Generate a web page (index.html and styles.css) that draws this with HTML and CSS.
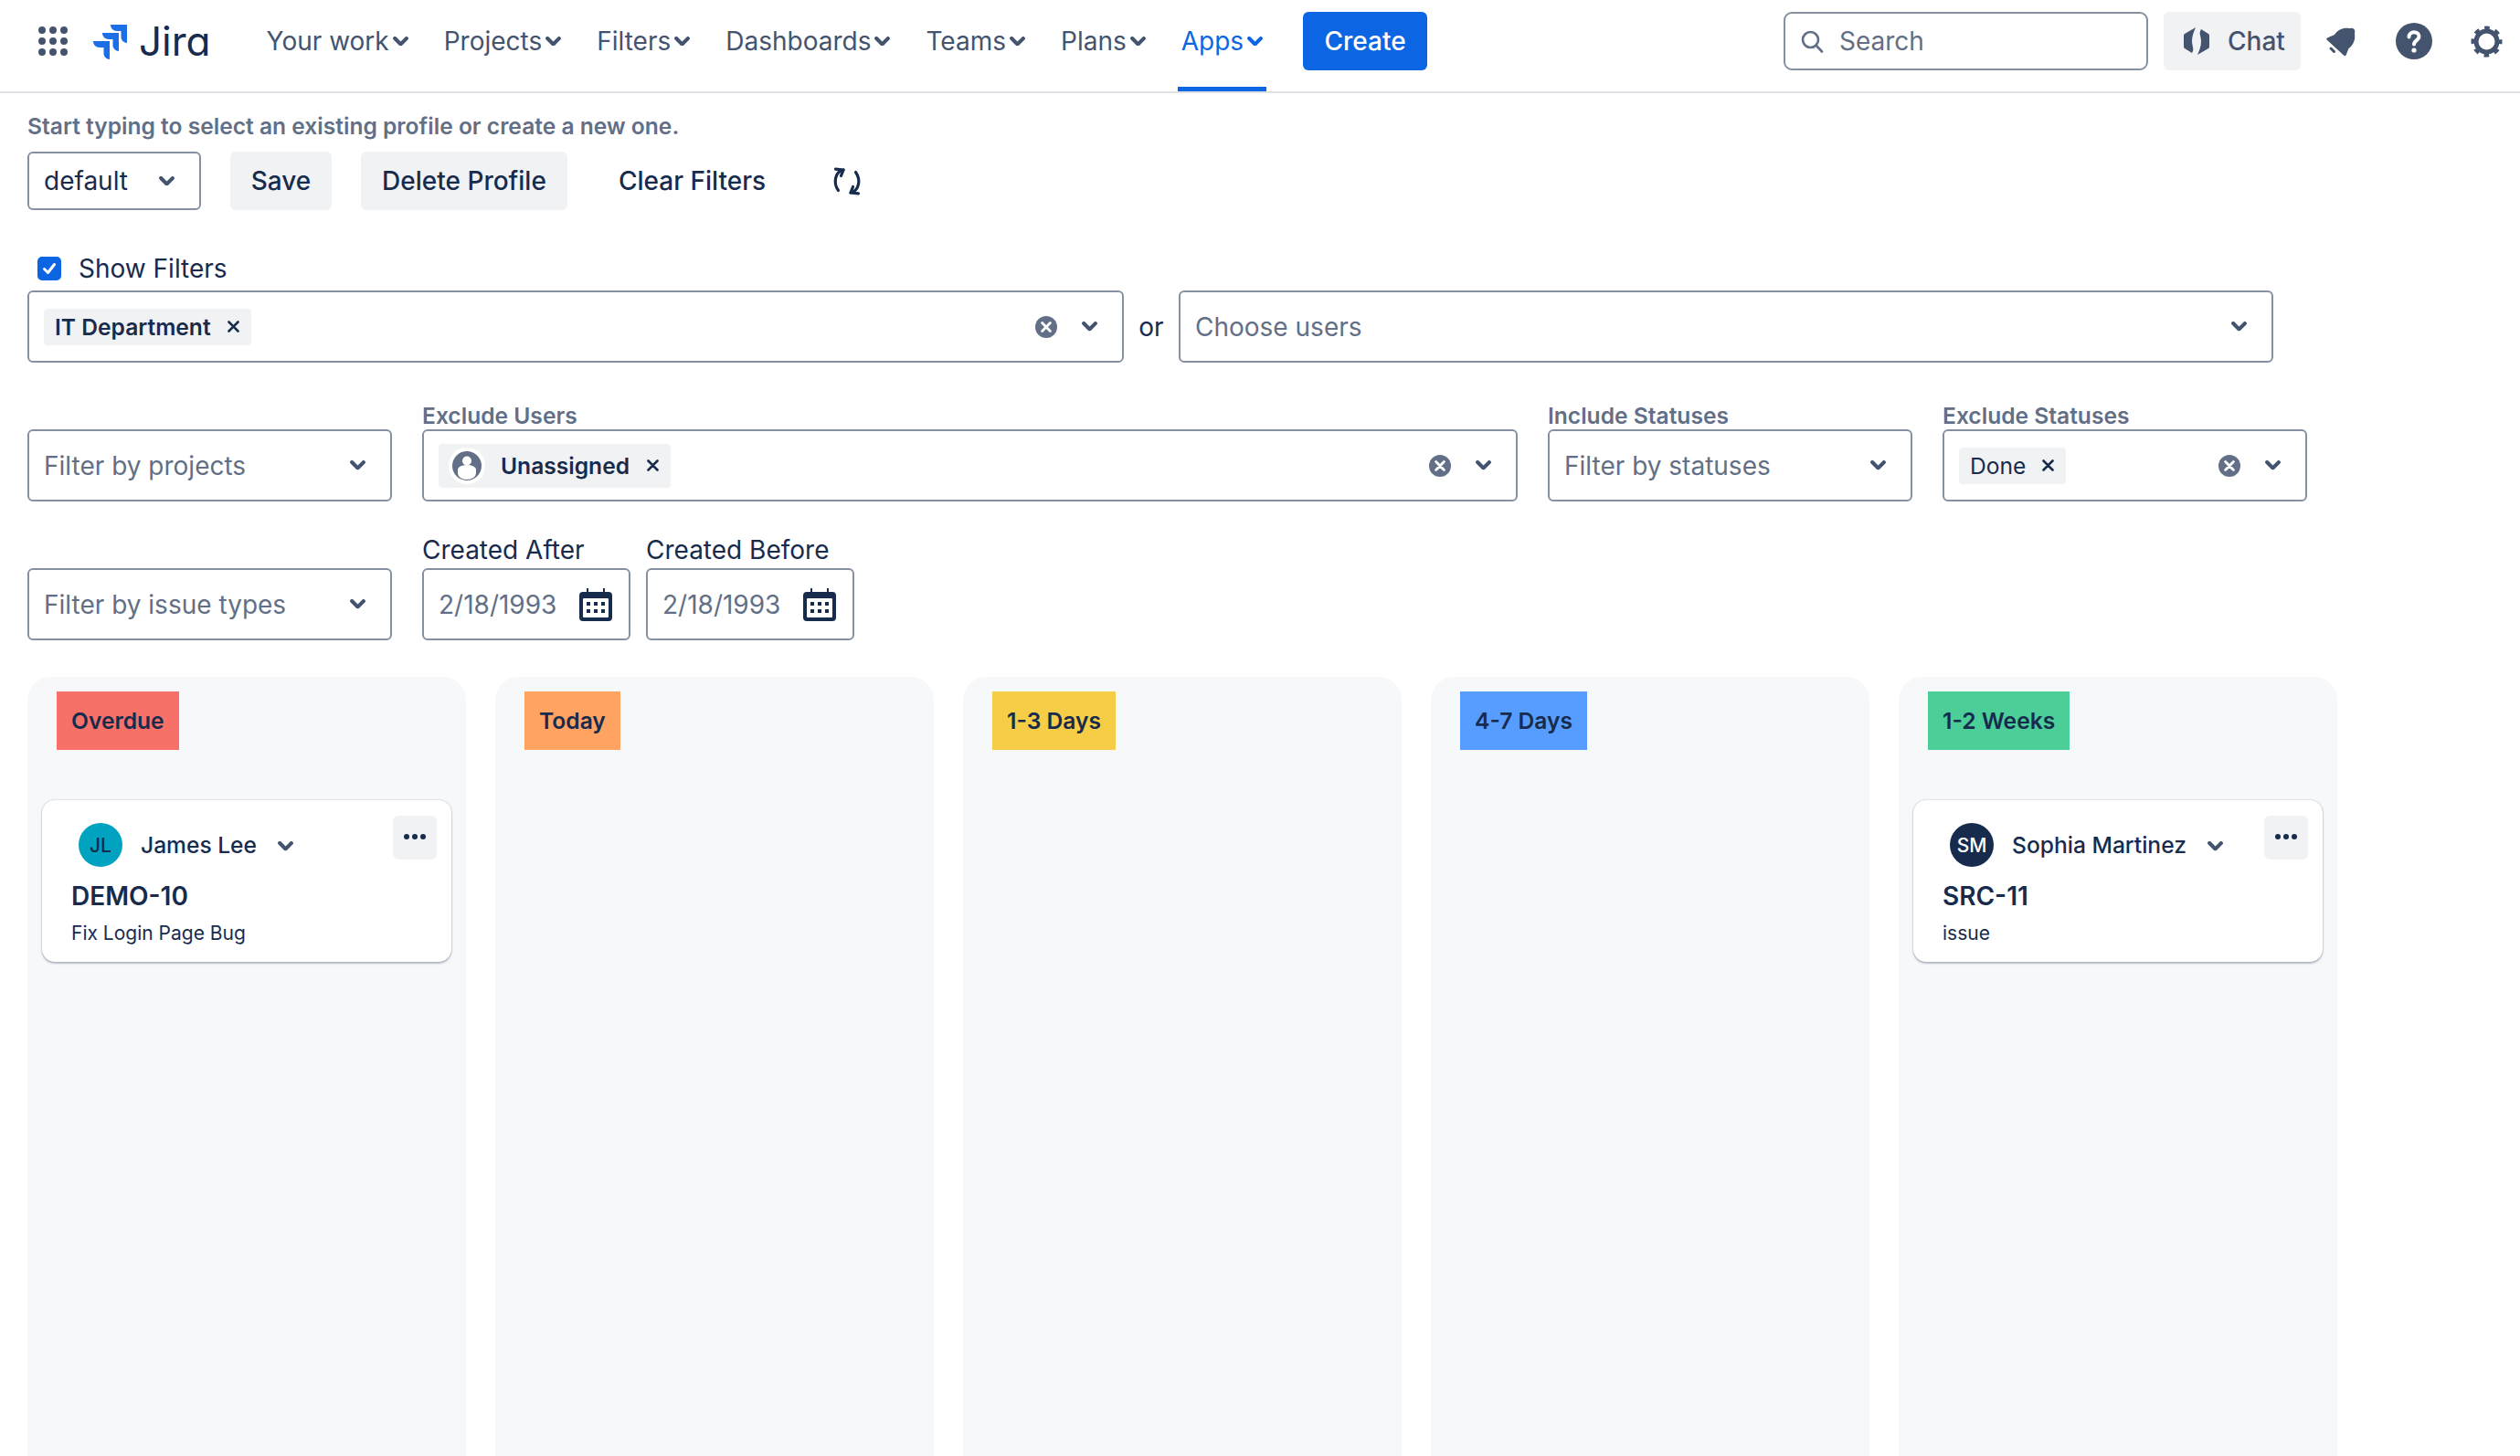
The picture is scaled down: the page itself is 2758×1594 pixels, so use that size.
FILE: index.html
```html
<!DOCTYPE html>
<html lang="en">
<head>
<meta charset="utf-8">
<title>Jira</title>
<link rel="stylesheet" href="styles.css">
</head>
<body>
<svg class="defs" aria-hidden="true">
  <symbol id="chev" viewBox="8 10 8 5"><path d="M8.292 10.293a1.009 1.009 0 000 1.419l2.939 2.965c.218.215.5.322.779.322s.556-.107.769-.322l2.93-2.955a1.01 1.01 0 000-1.419.987.987 0 00-1.406 0l-2.298 2.317-2.307-2.327a.99.99 0 00-1.406 0z" fill="currentColor"/></symbol>
  <symbol id="clear" viewBox="0 0 24 24"><circle cx="12" cy="12" r="12" fill="#626F86"/><path d="M7.6 7.6l8.8 8.8M16.4 7.6l-8.8 8.8" stroke="#fff" stroke-width="2.8" stroke-linecap="round"/></symbol>
  <symbol id="x" viewBox="0 0 13 13"><path d="M1.5 1.5l10 10M11.5 1.5l-10 10" stroke="#172B4D" stroke-width="2.6" stroke-linecap="round"/></symbol>
  <symbol id="cal" viewBox="0 0 36 36"><path d="M8 0h2v4h16V0h2v4h4a4 4 0 014 4v24a4 4 0 01-4 4H4a4 4 0 01-4-4V8a4 4 0 014-4h4z" fill="#172B4D"/><rect x="4" y="11" width="28" height="21" rx="1" fill="#fff"/><g fill="#172B4D"><rect x="8" y="15" width="4" height="4"/><rect x="16" y="15" width="4" height="4"/><rect x="24" y="15" width="4" height="4"/><rect x="8" y="23" width="4" height="4"/><rect x="16" y="23" width="4" height="4"/><rect x="24" y="23" width="4" height="4"/></g></symbol>
  <symbol id="dots" viewBox="0 0 24 6"><circle cx="3" cy="3" r="3" fill="#172B4D"/><circle cx="12" cy="3" r="3" fill="#172B4D"/><circle cx="21" cy="3" r="3" fill="#172B4D"/></symbol>
</svg>

<header class="topbar">
  <div class="cluster">
    <svg class="waffle" viewBox="0 0 32 32"><g fill="#44546F"><circle cx="4" cy="4" r="4"/><circle cx="16" cy="4" r="4"/><circle cx="28" cy="4" r="4"/><circle cx="4" cy="16" r="4"/><circle cx="16" cy="16" r="4"/><circle cx="28" cy="16" r="4"/><circle cx="4" cy="28" r="4"/><circle cx="16" cy="28" r="4"/><circle cx="28" cy="28" r="4"/></g></svg>
    <svg class="logo-mark" viewBox="0 0 37 38"><g fill="#1D6FE8"><path id="flag" d="M19 0H37V20C33.5 20 30.5 17 30.5 13.5V7H26C22 7 19 4 19 0Z"/><path d="M10 9H28V29C24.5 29 21.5 26 21.500 22.500V16H17C13 16 10 13 10 9Z"/><path d="M0 18H18V38C14.500 38 11.500 35 11.500 31.500V25H7C3 25 0 22 0 18Z"/></g></svg>
    <span class="logo-text">Jira</span>
  </div>
  <nav class="nav">
    <a class="nav-item">Your work<svg class="chev"><use href="#chev"/></svg></a>
    <a class="nav-item">Projects<svg class="chev"><use href="#chev"/></svg></a>
    <a class="nav-item">Filters<svg class="chev"><use href="#chev"/></svg></a>
    <a class="nav-item">Dashboards<svg class="chev"><use href="#chev"/></svg></a>
    <a class="nav-item">Teams<svg class="chev"><use href="#chev"/></svg></a>
    <a class="nav-item">Plans<svg class="chev"><use href="#chev"/></svg></a>
    <a class="nav-item active">Apps<svg class="chev"><use href="#chev"/></svg></a>
  </nav>
  <div class="cluster create-wrap"><button class="create">Create</button></div>
  <div class="cluster right">
    <div class="search">
      <svg class="search-icon" viewBox="0 0 25 25"><circle cx="10.500" cy="10.500" r="8.500" fill="none" stroke="#626F86" stroke-width="2.600"/><path d="M17 17l6 6.500" stroke="#626F86" stroke-width="2.600" stroke-linecap="round"/></svg>
      <span>Search</span>
    </div>
    <button class="chat">
      <svg class="chat-icon" viewBox="0 0 28 32"><g fill="#44546F"><path id="hexa" d="M13 1L1 8Q0 8.500 0 10V22Q0 23.500 1 24L9 29C12 24 9 22 9 16C9 10 11 6 13 1Z"/><path d="M13 1L1 8Q0 8.500 0 10V22Q0 23.500 1 24L9 29C12 24 9 22 9 16C9 10 11 6 13 1Z" transform="rotate(180 14 16)"/></g></svg>
      Chat
    </button>
    <svg class="bell" viewBox="0 0 32 33"><path d="M1 12.500C0 13.500 0 14 .5 14.500L19 31.500C20 32.500 21 32.500 21.500 31.500L24.500 24C30 20 32 14 31 8C31 6 32 4 30 2.500C28 1 27 2 25 2C19 1 13 3 9 9Z" fill="#44546F"/><path d="M5 24l3.500 3.500" stroke="#44546F" stroke-width="3" stroke-linecap="round"/></svg>
    <svg class="help" viewBox="0 0 40 40"><circle cx="20" cy="20" r="20" fill="#44546F"/><path d="M14.500 15.500c0-3.200 2.400-5.300 5.500-5.300s5.500 2 5.500 4.900c0 4-5.500 4-5.500 8.400" fill="none" stroke="#fff" stroke-width="4" stroke-linecap="round"/><circle cx="20" cy="30" r="2.600" fill="#fff"/></svg>
    <svg class="gear" viewBox="0 0 35 35"><circle cx="17.500" cy="17.500" r="11.500" fill="none" stroke="#44546F" stroke-width="5"/><circle cx="17.500" cy="17.500" r="15" fill="none" stroke="#44546F" stroke-width="4" stroke-dasharray="5.600 6.180" stroke-dashoffset="2.800"/></svg>
  </div>
</header>

<main class="main">
  <p class="hint">Start typing to select an existing profile or create a new one.</p>
  <div class="profile-row">
    <div class="select profile"><span class="grow value">default</span><svg class="chev"><use href="#chev"/></svg></div>
    <button class="btn save">Save</button>
    <button class="btn delete">Delete Profile</button>
    <button class="btn-plain">Clear Filters</button>
    <svg class="refresh" viewBox="0 0 34 31"><g fill="none" stroke="#172B4D" stroke-width="3.200" stroke-linecap="round" stroke-linejoin="round"><path d="M13 3C4 5 1.500 17 7.500 25.500"/><path d="M4.500 2.200L13 3L10.500 9.500"/><path d="M21 28C30 26 32.500 14 26.500 5.500"/><path d="M29.500 28.800L21 28L23.500 21.500"/></g></svg>
  </div>

  <label class="show-filters"><span class="checkbox"><svg viewBox="0 0 26 26"><path d="M7.500 13.500l4 4 7-9" fill="none" stroke="#fff" stroke-width="3" stroke-linecap="round" stroke-linejoin="round"/></svg></span>Show Filters</label>

  <div class="row row-one">
    <div class="select dept">
      <div class="grow tags"><span class="tag tag-it">IT Department<svg class="x"><use href="#x"/></svg></span></div>
      <svg class="clear"><use href="#clear"/></svg><svg class="chev"><use href="#chev"/></svg>
    </div>
    <span class="or">or</span>
    <div class="select users"><span class="grow placeholder">Choose users</span><svg class="chev"><use href="#chev"/></svg></div>
  </div>

  <div class="row row-two">
    <div class="field w399"><div class="select"><span class="grow placeholder">Filter by projects</span><svg class="chev"><use href="#chev"/></svg></div></div>
    <div class="field wide">
      <span class="label">Exclude Users</span>
      <div class="select tagged">
        <div class="grow tags"><span class="tag tag-user">
          <svg class="user-av" viewBox="0 0 40 40"><circle cx="20" cy="20" r="20" fill="#fff"/><circle cx="20" cy="20" r="16" fill="#626F86"/><circle cx="20" cy="14.500" r="5" fill="#fff"/><path d="M10 24a10 5 0 0120 0v4a10 7 0 01-20 0z" fill="#fff"/></svg>
          Unassigned<svg class="x"><use href="#x"/></svg></span></div>
        <svg class="clear"><use href="#clear"/></svg><svg class="chev"><use href="#chev"/></svg>
      </div>
    </div>
    <div class="field w399">
      <span class="label">Include Statuses</span>
      <div class="select"><span class="grow placeholder">Filter by statuses</span><svg class="chev"><use href="#chev"/></svg></div>
    </div>
    <div class="field w399">
      <span class="label">Exclude Statuses</span>
      <div class="select tagged">
        <div class="grow tags"><span class="tag tag-done">Done<svg class="x"><use href="#x"/></svg></span></div>
        <svg class="clear"><use href="#clear"/></svg><svg class="chev"><use href="#chev"/></svg>
      </div>
    </div>
  </div>

  <div class="row row-three">
    <div class="field w399"><div class="select"><span class="grow placeholder">Filter by issue types</span><svg class="chev"><use href="#chev"/></svg></div></div>
    <div class="field">
      <span class="label-plain">Created After</span>
      <div class="select date"><span class="grow date-value">2/18/1993</span><svg class="cal"><use href="#cal"/></svg></div>
    </div>
    <div class="field">
      <span class="label-plain">Created Before</span>
      <div class="select date"><span class="grow date-value">2/18/1993</span><svg class="cal"><use href="#cal"/></svg></div>
    </div>
  </div>

  <section class="board">
    <div class="col">
      <div class="col-head overdue">Overdue</div>
      <article class="card">
        <div class="card-top">
          <span class="avatar av-jl">JL</span><span class="name">James Lee</span><svg class="chev"><use href="#chev"/></svg>
          <button class="more"><svg class="dots"><use href="#dots"/></svg></button>
        </div>
        <div class="key">DEMO-10</div>
        <div class="summary">Fix Login Page Bug</div>
      </article>
    </div>
    <div class="col"><div class="col-head today">Today</div></div>
    <div class="col"><div class="col-head d13">1-3 Days</div></div>
    <div class="col"><div class="col-head d47">4-7 Days</div></div>
    <div class="col">
      <div class="col-head w12">1-2 Weeks</div>
      <article class="card">
        <div class="card-top">
          <span class="avatar av-sm">SM</span><span class="name">Sophia Martinez</span><svg class="chev"><use href="#chev"/></svg>
          <button class="more"><svg class="dots"><use href="#dots"/></svg></button>
        </div>
        <div class="key">SRC-11</div>
        <div class="summary">issue</div>
      </article>
    </div>
  </section>
</main>
</body>
</html>
```
FILE: styles.css
```css
* { box-sizing: border-box; }
html, body { height: 100%; }
body {
  margin: 0;
  height: 100vh;
  overflow: hidden;
  display: flex;
  flex-direction: column;
  background: #fff;
  color: #172B4D;
  font-family: Inter, "Liberation Sans", sans-serif;
  font-size: 28px;
}
button { font-family: inherit; border: 0; cursor: pointer; }
.defs { display: none; }
.chev { width: 17px; height: 10.500px; color: #44546F; flex: none; }

.topbar {
  display: flex;
  flex: none;
  height: 102px;
  border-bottom: 2px solid #DFE1E6;
}
.cluster {
  display: flex;
  align-items: center;
  height: 100px;
  padding-bottom: 10px;
}
.waffle { width: 32px; height: 32px; margin-left: 42px; }
.logo-mark { width: 37px; height: 38px; margin-left: 28px; margin-top: 2px; }
.logo-text {
  margin-left: 13px;
  font-size: 44px;
  font-weight: 400;
  line-height: 1;
  font-feature-settings: "cv11" 1;
  color: #172B4D;
}
.nav { display: flex; gap: 31px; margin-left: 57px; }
.nav-item {
  display: flex;
  align-items: center;
  gap: 4px;
  height: 100px;
  padding: 0 4px 10px;
  color: #44546F;
  font-size: 28px;
}
.nav-item.active {
  color: #0C66E4;
  border-bottom: 5px solid #0C66E4;
  padding-bottom: 5px;
}
.nav-item.active .chev { color: #0C66E4; }
.create-wrap { margin-left: 40px; }
.create {
  width: 136px;
  height: 64px;
  background: #0C66E4;
  color: #fff;
  font-size: 28px;
  font-weight: 500;
  border-radius: 6px;
}
.right { margin-left: auto; padding-right: 19px; }
.search {
  display: flex;
  align-items: center;
  width: 399px;
  height: 64px;
  border: 2px solid #8590A2;
  border-radius: 9px;
  padding-left: 17px;
  color: #626F86;
}
.search-icon { width: 25px; height: 25px; margin-right: 17px; }
.chat {
  display: flex;
  align-items: center;
  gap: 20px;
  width: 150px;
  height: 64px;
  margin-left: 17px;
  padding-left: 22px;
  background: #F1F2F4;
  border-radius: 6px;
  color: #44546F;
  font-size: 28px;
  font-weight: 500;
}
.chat-icon { width: 28px; height: 32px; }
.bell { width: 32px; height: 33px; margin-left: 28px; }
.help { width: 40px; height: 40px; margin-left: 44px; }
.gear { width: 35px; height: 35px; margin-left: 42px; }

.main {
  flex: 1;
  display: flex;
  flex-direction: column;
  min-height: 0;
  padding-left: 30px;
}
.hint {
  margin: 21px 0 0;
  font-size: 24.600px;
  line-height: 30px;
  font-weight: 600;
  color: #626F86;
}
.profile-row {
  display: flex;
  align-items: center;
  margin-top: 13px;
  height: 64px;
}
.select {
  display: flex;
  align-items: center;
  height: 79px;
  border: 2px solid #8590A2;
  border-radius: 6px;
  padding: 0 27px 0 16px;
  background: #fff;
}
.grow { flex: 1; min-width: 0; }
.select.profile { width: 190px; height: 64px; }
.value { color: #172B4D; }
.btn {
  height: 64px;
  background: #F1F2F4;
  border-radius: 6px;
  color: #172B4D;
  font-size: 28px;
  font-weight: 500;
}
.save { width: 111px; margin-left: 32px; }
.delete { width: 226px; margin-left: 32px; }
.btn-plain {
  background: none;
  margin-left: 56px;
  padding: 0;
  color: #172B4D;
  font-size: 28px;
  font-weight: 500;
}
.refresh { width: 34px; height: 31px; margin-left: 72px; }

.show-filters {
  display: flex;
  align-items: center;
  gap: 19px;
  height: 30px;
  margin: 49px 0 0 11px;
}
.checkbox {
  width: 26px;
  height: 26px;
  border-radius: 5px;
  background: #0C66E4;
  display: block;
}
.checkbox svg { display: block; width: 26px; height: 26px; }

.row { display: flex; align-items: flex-end; }
.row-one { margin-top: 9px; align-items: center; }
.row-two { margin-top: 43px; gap: 33px; }
.row-three { margin-top: 36px; gap: 17px; }
.row-three .w399 { margin-right: 16px; }
.dept { width: 1200px; }
.or { width: 60px; text-align: center; }
.users { width: 1198px; }
.placeholder, .date-value { color: #626F86; }
.field { display: flex; flex-direction: column; }
.w399 { width: 399px; }
.wide { width: 1199px; }
.label {
  font-size: 24.600px;
  font-weight: 600;
  line-height: 30px;
  color: #626F86;
}
.label-plain { font-size: 28px; line-height: 35px; margin-bottom: 2px; }
.tags { display: flex; align-items: center; }
.tag {
  display: flex;
  align-items: center;
  gap: 18px;
  background: #F1F2F4;
  border-radius: 4px;
  color: #172B4D;
  font-size: 24.600px;
  white-space: nowrap;
}
.select.tagged { padding-left: 16px; }
.tag-it { height: 40px; padding: 0 13px 0 12px; font-weight: 600; }
.tag-user { height: 48px; padding: 0 13px 0 11px; font-weight: 600; gap: 0; }
.tag-user .x { margin-left: 19px; }
.tag-done { height: 40px; padding: 0 13px 0 12px; font-weight: 400; }
.user-av { width: 40px; height: 40px; margin-right: 17px; }
.x { width: 13px; height: 13px; flex: none; }
.clear { width: 24px; height: 24px; margin-right: 27px; flex: none; }
.date { width: 228px; padding-right: 18px; }
.cal { width: 36px; height: 36px; flex: none; }

.board {
  flex: 1;
  display: flex;
  gap: 32px;
  margin-top: 40px;
  min-height: 0;
}
.col {
  width: 480px;
  background: #F7F8F9;
  border-radius: 25px 25px 0 0;
  padding: 16px 16px 0;
  display: flex;
  flex-direction: column;
  align-items: flex-start;
}
.col-head {
  height: 64px;
  margin-left: 16px;
  padding: 0 16px;
  display: flex;
  align-items: center;
  font-size: 24.600px;
  font-weight: 600;
  color: #172B4D;
}
.overdue { background: #F87168; }
.today { background: #FEA362; }
.d13 { background: #F5CD47; }
.d47 { background: #579DFF; }
.w12 { background: #4BCE97; }
.card {
  width: 448px;
  height: 177px;
  margin-top: 55px;
  padding: 17px 16px 0 32px;
  background: #fff;
  border-radius: 14px;
  box-shadow: 0 2px 2px rgba(9, 30, 66, .25), 0 0 2px rgba(9, 30, 66, .31);
}
.card-top { display: flex; align-items: flex-start; height: 56px; padding-left: 8px; }
.avatar {
  width: 48px;
  height: 48px;
  margin-top: 8px;
  border-radius: 50%;
  display: flex;
  align-items: center;
  justify-content: center;
  font-size: 21px;
  font-weight: 500;
}
.av-jl { background: #00A3BF; color: #172B4D; }
.av-sm { background: #172B4D; color: #fff; }
.name {
  margin: 17px 0 0 20px;
  line-height: 30px;
  font-size: 24.600px;
  font-weight: 500;
}
.card-top .chev { margin: 28px 0 0 23px; }
.more {
  margin-left: auto;
  width: 48px;
  height: 48px;
  padding: 0;
  background: #F1F2F4;
  border-radius: 6px;
  display: flex;
  align-items: center;
  justify-content: center;
}
.dots { width: 24px; height: 6px; margin-bottom: 2px; }
.key { margin-top: 15px; font-size: 28px; line-height: 34px; font-weight: 600; }
.summary { margin-top: 9px; font-size: 21px; line-height: 30px; }
```
